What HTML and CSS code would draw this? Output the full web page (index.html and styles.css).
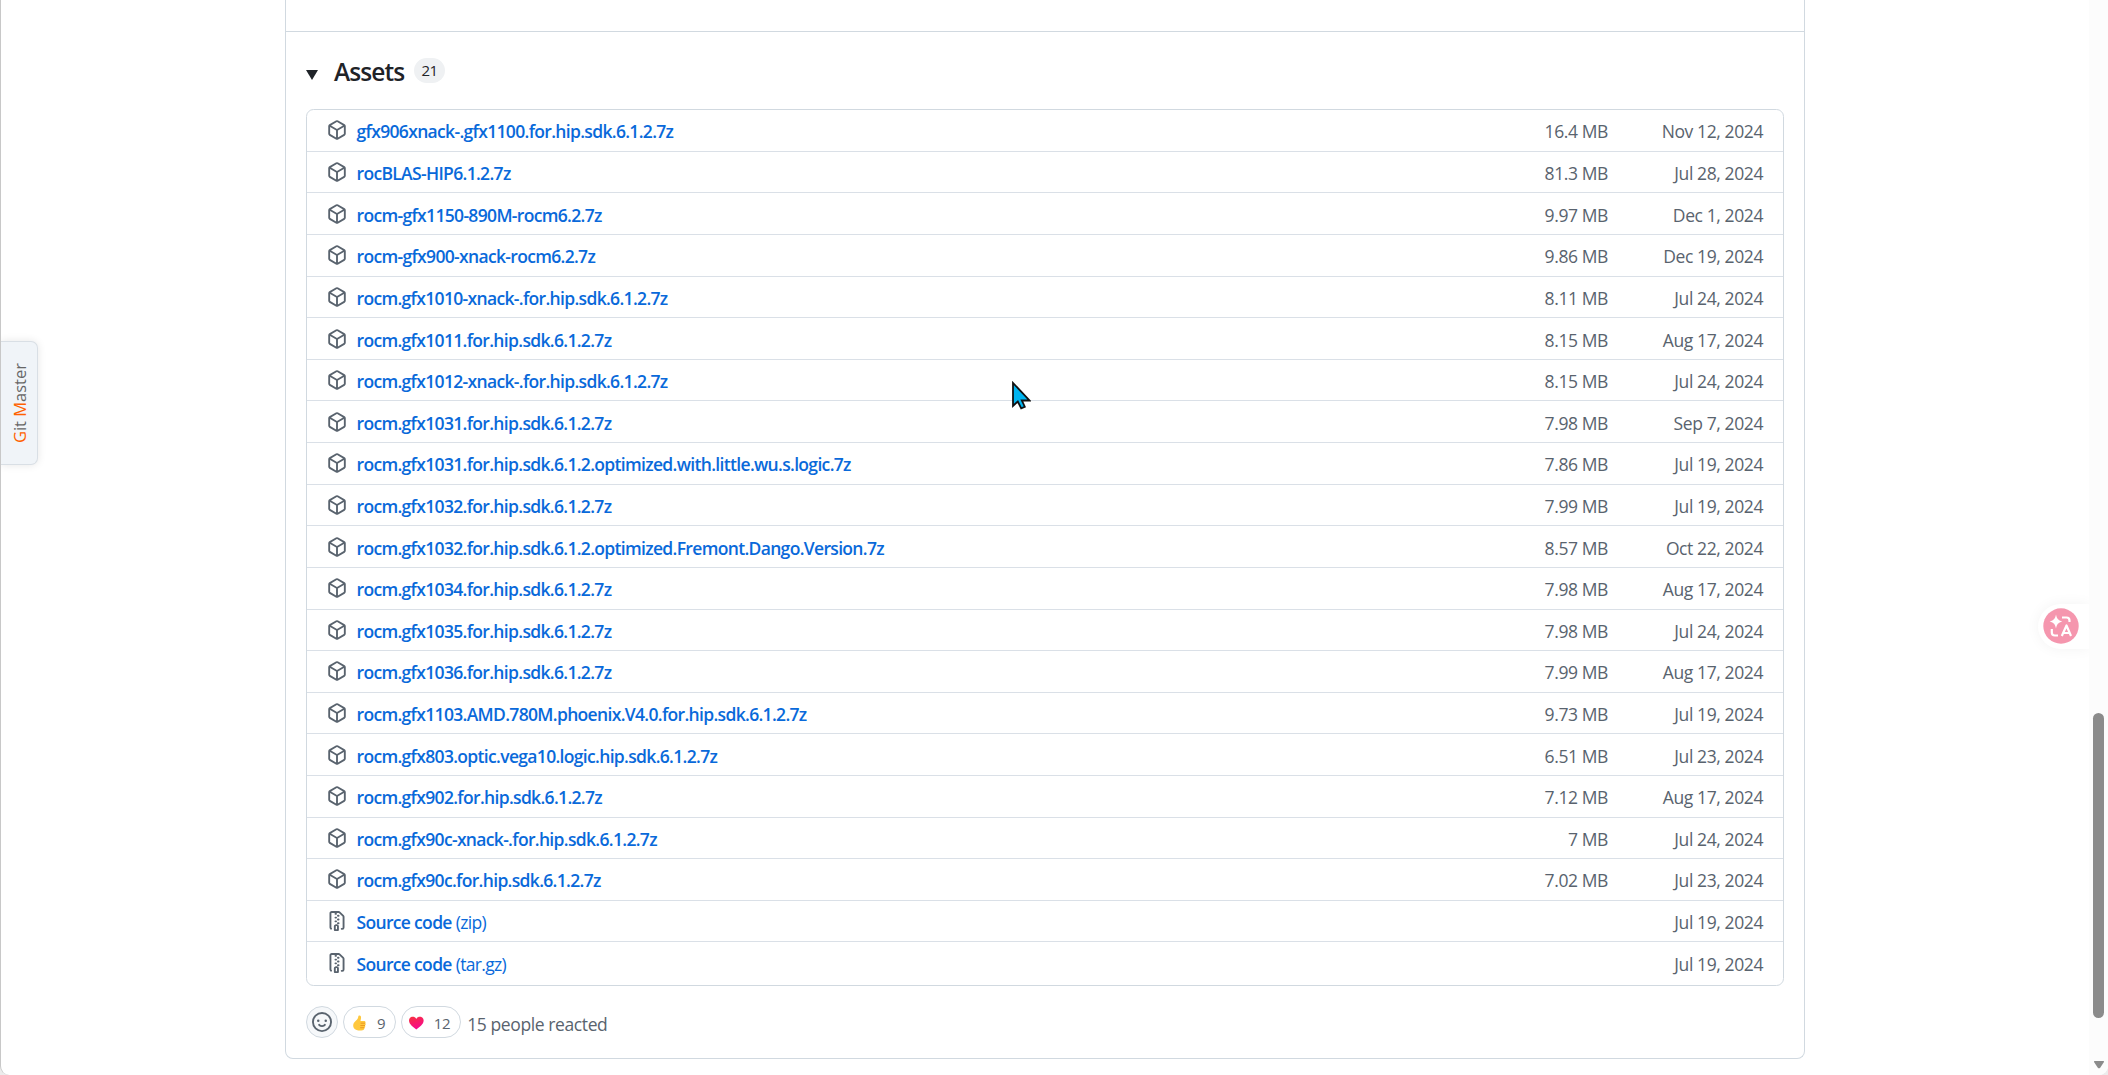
FILE: index.html
```html
<!DOCTYPE html>
<html lang="en">
<head>
  <meta charset="UTF-8">
  <meta name="viewport" content="width=device-width, initial-scale=1.0">
  <title>Release assets</title>
  <link rel="stylesheet" href="styles.css">
</head>
<body>

  <!-- shared icons -->
  <svg class="sprite" xmlns="http://www.w3.org/2000/svg">
    <symbol id="package" viewBox="0 0 16 16">
      <path d="m8.878.392 5.25 3.045c.54.314.872.89.872 1.514v6.098a1.75 1.75 0 0 1-.872 1.514l-5.25 3.045a1.75 1.75 0 0 1-1.756 0l-5.25-3.045A1.75 1.75 0 0 1 1 11.049V4.951c0-.624.332-1.201.872-1.514L7.122.392a1.75 1.75 0 0 1 1.756 0ZM7.875 1.69l-4.63 2.685L8 7.133l4.755-2.758-4.63-2.685a.248.248 0 0 0-.25 0ZM2.5 5.677v5.372c0 .09.047.171.125.216l4.625 2.683V8.432Zm6.25 8.271 4.625-2.683a.25.25 0 0 0 .125-.216V5.677L8.75 8.432Z"/>
    </symbol>
    <symbol id="file-zip" viewBox="0 0 16 16">
      <path d="M3.5 1.75v11.5c0 .09.048.173.126.217a.75.75 0 0 1-.752 1.298A1.748 1.748 0 0 1 2 13.25V1.75C2 .784 2.784 0 3.75 0h5.586c.464 0 .909.185 1.237.513l2.914 2.914c.329.328.513.773.513 1.237v8.586A1.75 1.75 0 0 1 12.25 15h-.5a.75.75 0 0 1 0-1.5h.5a.25.25 0 0 0 .25-.25V4.664a.25.25 0 0 0-.073-.177L9.513 1.573a.25.25 0 0 0-.177-.073H7.25a.75.75 0 0 1 0 1.5h-.5a.75.75 0 0 1 0-1.5h-3a.25.25 0 0 0-.25.25Zm3.75 8.75h.5c.966 0 1.75.784 1.75 1.75v3a.75.75 0 0 1-.75.75h-2.5a.75.75 0 0 1-.75-.75v-3c0-.966.784-1.75 1.75-1.75ZM6 5.25a.75.75 0 0 1 .75-.75h.5a.75.75 0 0 1 0 1.5h-.5A.75.75 0 0 1 6 5.25Zm.75 2.25h.5a.75.75 0 0 1 0 1.5h-.5a.75.75 0 0 1 0-1.5ZM8 6.75A.75.75 0 0 1 8.75 6h.5a.75.75 0 0 1 0 1.5h-.5A.75.75 0 0 1 8 6.75ZM8.75 3h.5a.75.75 0 0 1 0 1.5h-.5a.75.75 0 0 1 0-1.5ZM8 9.75A.75.75 0 0 1 8.75 9h.5a.75.75 0 0 1 0 1.5h-.5A.75.75 0 0 1 8 9.75Zm-1 2.5v2.25h1v-2.25a.25.25 0 0 0-.25-.25h-.5a.25.25 0 0 0-.25.25Z"/>
    </symbol>
  </svg>

  <main class="release">
    <div class="release-body"></div>
    <section class="assets">
      <h3 class="assets-title">
        <svg class="caret" viewBox="0 0 12 10"><path d="M0 0h12L6 10z"/></svg>
        <span class="assets-name">Assets</span>
        <span class="counter">21</span>
      </h3>

      <ul class="asset-list">
        <li class="asset"><svg class="icon"><use href="#package"/></svg><a class="name">gfx906xnack-.gfx1100.for.hip.sdk.6.1.2.7z</a><span class="size">16.4 MB</span><span class="date">Nov 12, 2024</span></li>
        <li class="asset"><svg class="icon"><use href="#package"/></svg><a class="name">rocBLAS-HIP6.1.2.7z</a><span class="size">81.3 MB</span><span class="date">Jul 28, 2024</span></li>
        <li class="asset"><svg class="icon"><use href="#package"/></svg><a class="name">rocm-gfx1150-890M-rocm6.2.7z</a><span class="size">9.97 MB</span><span class="date">Dec 1, 2024</span></li>
        <li class="asset"><svg class="icon"><use href="#package"/></svg><a class="name">rocm-gfx900-xnack-rocm6.2.7z</a><span class="size">9.86 MB</span><span class="date">Dec 19, 2024</span></li>
        <li class="asset"><svg class="icon"><use href="#package"/></svg><a class="name">rocm.gfx1010-xnack-.for.hip.sdk.6.1.2.7z</a><span class="size">8.11 MB</span><span class="date">Jul 24, 2024</span></li>
        <li class="asset"><svg class="icon"><use href="#package"/></svg><a class="name">rocm.gfx1011.for.hip.sdk.6.1.2.7z</a><span class="size">8.15 MB</span><span class="date">Aug 17, 2024</span></li>
        <li class="asset"><svg class="icon"><use href="#package"/></svg><a class="name">rocm.gfx1012-xnack-.for.hip.sdk.6.1.2.7z</a><span class="size">8.15 MB</span><span class="date">Jul 24, 2024</span></li>
        <li class="asset"><svg class="icon"><use href="#package"/></svg><a class="name">rocm.gfx1031.for.hip.sdk.6.1.2.7z</a><span class="size">7.98 MB</span><span class="date">Sep 7, 2024</span></li>
        <li class="asset"><svg class="icon"><use href="#package"/></svg><a class="name">rocm.gfx1031.for.hip.sdk.6.1.2.optimized.with.little.wu.s.logic.7z</a><span class="size">7.86 MB</span><span class="date">Jul 19, 2024</span></li>
        <li class="asset"><svg class="icon"><use href="#package"/></svg><a class="name">rocm.gfx1032.for.hip.sdk.6.1.2.7z</a><span class="size">7.99 MB</span><span class="date">Jul 19, 2024</span></li>
        <li class="asset"><svg class="icon"><use href="#package"/></svg><a class="name">rocm.gfx1032.for.hip.sdk.6.1.2.optimized.Fremont.Dango.Version.7z</a><span class="size">8.57 MB</span><span class="date">Oct 22, 2024</span></li>
        <li class="asset"><svg class="icon"><use href="#package"/></svg><a class="name">rocm.gfx1034.for.hip.sdk.6.1.2.7z</a><span class="size">7.98 MB</span><span class="date">Aug 17, 2024</span></li>
        <li class="asset"><svg class="icon"><use href="#package"/></svg><a class="name">rocm.gfx1035.for.hip.sdk.6.1.2.7z</a><span class="size">7.98 MB</span><span class="date">Jul 24, 2024</span></li>
        <li class="asset"><svg class="icon"><use href="#package"/></svg><a class="name">rocm.gfx1036.for.hip.sdk.6.1.2.7z</a><span class="size">7.99 MB</span><span class="date">Aug 17, 2024</span></li>
        <li class="asset"><svg class="icon"><use href="#package"/></svg><a class="name">rocm.gfx1103.AMD.780M.phoenix.V4.0.for.hip.sdk.6.1.2.7z</a><span class="size">9.73 MB</span><span class="date">Jul 19, 2024</span></li>
        <li class="asset"><svg class="icon"><use href="#package"/></svg><a class="name">rocm.gfx803.optic.vega10.logic.hip.sdk.6.1.2.7z</a><span class="size">6.51 MB</span><span class="date">Jul 23, 2024</span></li>
        <li class="asset"><svg class="icon"><use href="#package"/></svg><a class="name">rocm.gfx902.for.hip.sdk.6.1.2.7z</a><span class="size">7.12 MB</span><span class="date">Aug 17, 2024</span></li>
        <li class="asset"><svg class="icon"><use href="#package"/></svg><a class="name">rocm.gfx90c-xnack-.for.hip.sdk.6.1.2.7z</a><span class="size">7 MB</span><span class="date">Jul 24, 2024</span></li>
        <li class="asset"><svg class="icon"><use href="#package"/></svg><a class="name">rocm.gfx90c.for.hip.sdk.6.1.2.7z</a><span class="size">7.02 MB</span><span class="date">Jul 23, 2024</span></li>
        <li class="asset"><svg class="icon"><use href="#file-zip"/></svg><a class="name">Source code <span class="ext">(zip)</span></a><span class="date">Jul 19, 2024</span></li>
        <li class="asset"><svg class="icon"><use href="#file-zip"/></svg><a class="name">Source code <span class="ext">(tar.gz)</span></a><span class="date">Jul 19, 2024</span></li>
      </ul>

      <div class="reactions">
        <button class="add-reaction">
          <svg class="icon" viewBox="0 0 16 16"><path d="M8 0a8 8 0 1 1 0 16A8 8 0 0 1 8 0ZM1.5 8a6.5 6.5 0 1 0 13 0 6.5 6.5 0 0 0-13 0Zm3.82 1.636a.75.75 0 0 1 1.038.175l.007.009c.103.118.22.222.35.31.264.178.683.37 1.285.37.602 0 1.02-.192 1.285-.371.13-.088.247-.192.35-.31l.007-.008a.75.75 0 0 1 1.222.87l-.022-.015c.02.013.021.015.021.015v.001l-.001.002-.002.003-.005.007-.014.019a2.066 2.066 0 0 1-.184.213c-.16.166-.338.316-.53.445-.63.418-1.37.638-2.127.629-.946 0-1.652-.308-2.126-.63a3.331 3.331 0 0 1-.715-.657l-.014-.02-.005-.006-.002-.003v-.002h-.001l.613-.432-.614.43a.75.75 0 0 1 .183-1.044ZM12 7a1 1 0 1 1-2 0 1 1 0 0 1 2 0ZM5 8a1 1 0 1 1 0-2 1 1 0 0 1 0 2Z"/></svg>
        </button>
        <button class="reaction">
          <svg class="thumb" viewBox="0 0 13 16">
            <path d="M6.2.6c1.500-.3 2 1 1.800 2.600L7.500 6h3.500c1.500 0 1.900 1.500 1.200 2.200.8.700.600 1.900-.2 2.300.5.900.200 1.800-.6 2.100.200 1.200-.5 2.300-1.800 2.600-2 .4-4.400.3-6-.3C1.200 14.200.200 12.700.200 10.800c0-2.300.8-3.400 2.600-5C4.500 4.300 5.200 3 5.300 1.500c0-.5.300-.8.900-.9z" fill="#ffc83d"/>
            <path d="M7.600 8.200h4.600M7.400 10.500H12M7.200 12.700h4.200" stroke="#e88f1a" stroke-width=".8" fill="none"/>
          </svg>
          <span>9</span>
        </button>
        <button class="reaction">
          <svg class="heart" viewBox="0 0 16 14">
            <defs>
              <linearGradient id="heart-fill" x1="0" y1="0" x2=".4" y2="1">
                <stop offset="0" stop-color="#f8313c"/>
                <stop offset="1" stop-color="#f70a8d"/>
              </linearGradient>
            </defs>
            <path d="M8 14C4.500 11.600 0 8.500 0 4.400 0 1.900 1.800.2 4.100.2 5.900.2 7.300 1.100 8 2.500 8.700 1.100 10.100.2 11.900.2 14.200.2 16 1.900 16 4.400 16 8.500 11.500 11.600 8 14z" fill="url(#heart-fill)"/>
          </svg>
          <span>12</span>
        </button>
        <span class="reacted">15 people reacted</span>
      </div>
    </section>
  </main>

  <!-- left side tab -->
  <div class="side-tab"><span><b>G</b>it <b>M</b>aster</span></div>

  <!-- floating translate button -->
  <div class="translate">
    <svg viewBox="0 0 36 36">
      <circle cx="18" cy="18" r="17.700" fill="#f596ae"/>
      <path d="M13 6.500c.9 4.200 2 5.600 6.300 7-4.300 1.300-5.400 2.700-6.300 7-.9-4.300-2-5.700-6.300-7 4.300-1.400 5.400-2.800 6.300-7z" fill="#fff"/>
      <path d="M19 9.500h4.500q3 0 3 3v1.500M8.800 21v3.500q0 3 3 3h3.200M18.800 28l4.700-10.500L28 28M20.500 25h6" fill="none" stroke="#fff" stroke-width="2.200" stroke-linejoin="round"/>
    </svg>
  </div>

  <!-- scrollbar -->
  <div class="scrollbar">
    <div class="thumb-bar"></div>
    <svg class="arrow" viewBox="0 0 10 8"><path d="M.5 0h9q.8.500.3 1.300L6.200 6.800q-1.200 1-2.400 0L.2 1.300Q-.3.500.5 0z"/></svg>
  </div>

  <svg class="cursor" viewBox="0 0 20 30"><path d="M2 2v23l4.800-4.500 3.400 6.800 3.600-1.600-3-6.200H18.500z"/></svg>

</body>
</html>
```
FILE: styles.css
```css
* {
  box-sizing: border-box;
}

html {
  background: #ececec;
}

body {
  margin: 0;
  height: 1075px;
  position: relative;
  overflow: hidden;
  background: #fff;
  border-left: 1px solid #c8c8c8;
  border-radius: 0 0 9px 9px;
  color: #1f2328;
  font-family: "Open Sans", "Noto Sans", sans-serif;
  font-size: 17.5px;
}

.sprite {
  position: absolute;
  width: 0;
  height: 0;
}

/* Release card */
.release {
  width: 1520px;
  height: 1059px;
  margin-left: 284px;
  border: 1px solid #d1d9e0;
  border-top: 0;
  border-radius: 0 0 8px 8px;
}

.release-body {
  height: 32px;
  border-bottom: 1px solid #d1d9e0;
}

.assets {
  padding: 0 20px;
}

.assets-title {
  display: flex;
  align-items: center;
  height: 77px;
  margin: 0;
  font-weight: 600;
}

.caret {
  width: 12px;
  height: 10px;
  margin: 8px 16px 0 0;
  fill: #1f2328;
}

.assets-name {
  width: 71px;
  margin-top: 1px;
  font-size: 24.5px;
  letter-spacing: -0.9px;
}

.counter {
  width: 31px;
  height: 25px;
  margin: 0 0 0 9px;
  border-radius: 13px;
  background: #eff1f3;
  font-size: 15px;
  font-weight: 500;
  line-height: 25px;
  letter-spacing: -0.5px;
  text-align: center;
}

/* Asset table */
.asset-list {
  height: 877px;
  margin: 0;
  padding: 0;
  list-style: none;
  border: 1px solid #d1d9e0;
  border-radius: 7.5px;
}

.asset {
  display: flex;
  align-items: center;
  height: 41.62px;
  padding: 2px 20px 0;
  border-top: 1px solid #dae0e7;
}

.asset:first-child {
  height: 40.8px;
  border-top: 0;
}

.icon {
  flex: none;
  width: 20px;
  height: 20px;
  fill: #59636e;
}

.asset .icon {
  margin-top: -2px;
}

.name {
  margin-left: 9.5px;
  flex: 1;
  color: #0969da;
  font-weight: 600;
  letter-spacing: -0.67px;
}

.ext {
  font-weight: 400;
}

.size,
.date {
  color: #59636e;
  text-align: right;
  letter-spacing: -0.4px;
}

.date {
  width: 155px;
}

/* Reactions */
.reactions {
  display: flex;
  align-items: center;
  margin-top: 20px;
  color: #59636e;
}

.reactions button {
  display: flex;
  align-items: center;
  height: 32px;
  padding: 0;
  border: 1px solid #d1d9e0;
  border-radius: 16px;
  background: #fff;
  color: #59636e;
  font-family: inherit;
  font-size: 15px;
  letter-spacing: -0.4px;
}

.reactions .add-reaction {
  width: 32px;
  justify-content: center;
  background: #f6f8fa;
}

.reactions .reaction {
  margin-left: 5px;
  padding: 2px 10px 0 9px;
}

.reactions .reaction + .reaction {
  width: 60px;
  padding-left: 7px;
}

.thumb {
  width: 13px;
  height: 16px;
  margin-right: 11px;
}

.heart {
  width: 16px;
  height: 14px;
  margin-right: 10px;
}

.reacted {
  margin: 3px 0 0 6px;
  letter-spacing: -0.4px;
}

/* Things floating over the page */
.side-tab {
  position: absolute;
  left: 0;
  top: 341px;
  width: 37px;
  height: 124px;
  display: flex;
  align-items: center;
  justify-content: center;
  border: 1px solid #d9dfe5;
  border-left: 0;
  border-radius: 0 7px 7px 0;
  background: #f0f4f8;
  box-shadow: 0 0 8px rgba(0, 0, 0, 0.1);
  color: #666;
  font-size: 16.5px;
}

.side-tab span {
  writing-mode: vertical-rl;
  transform: rotate(180deg);
}

.side-tab b {
  color: #ff6200;
  font-weight: 400;
}

.translate {
  position: absolute;
  right: 19px;
  top: 604px;
  width: 51px;
  height: 45px;
  padding: 4px 0 0 5px;
  border-radius: 23px 0 0 23px;
  background: #fff;
  box-shadow: 0 0 14px rgba(0, 0, 0, 0.05);
}

.translate svg {
  display: block;
  width: 36px;
  height: 36px;
}

.scrollbar {
  position: absolute;
  top: 0;
  right: 0;
  width: 19px;
  height: 1075px;
  padding: 713px 4px 0;
  background: #fcfcfc;
}

.thumb-bar {
  width: 11px;
  height: 305px;
  border-radius: 6px;
  background: #8b8b8b;
}

.arrow {
  display: block;
  width: 10px;
  height: 8px;
  margin: 43px 0 0 1px;
  fill: #8b8b8b;
}

.cursor {
  position: absolute;
  left: 1010px;
  top: 381px;
  width: 20px;
  height: 30px;
  fill: #00b4f0;
  stroke: #111;
  stroke-width: 1.8;
}
```
